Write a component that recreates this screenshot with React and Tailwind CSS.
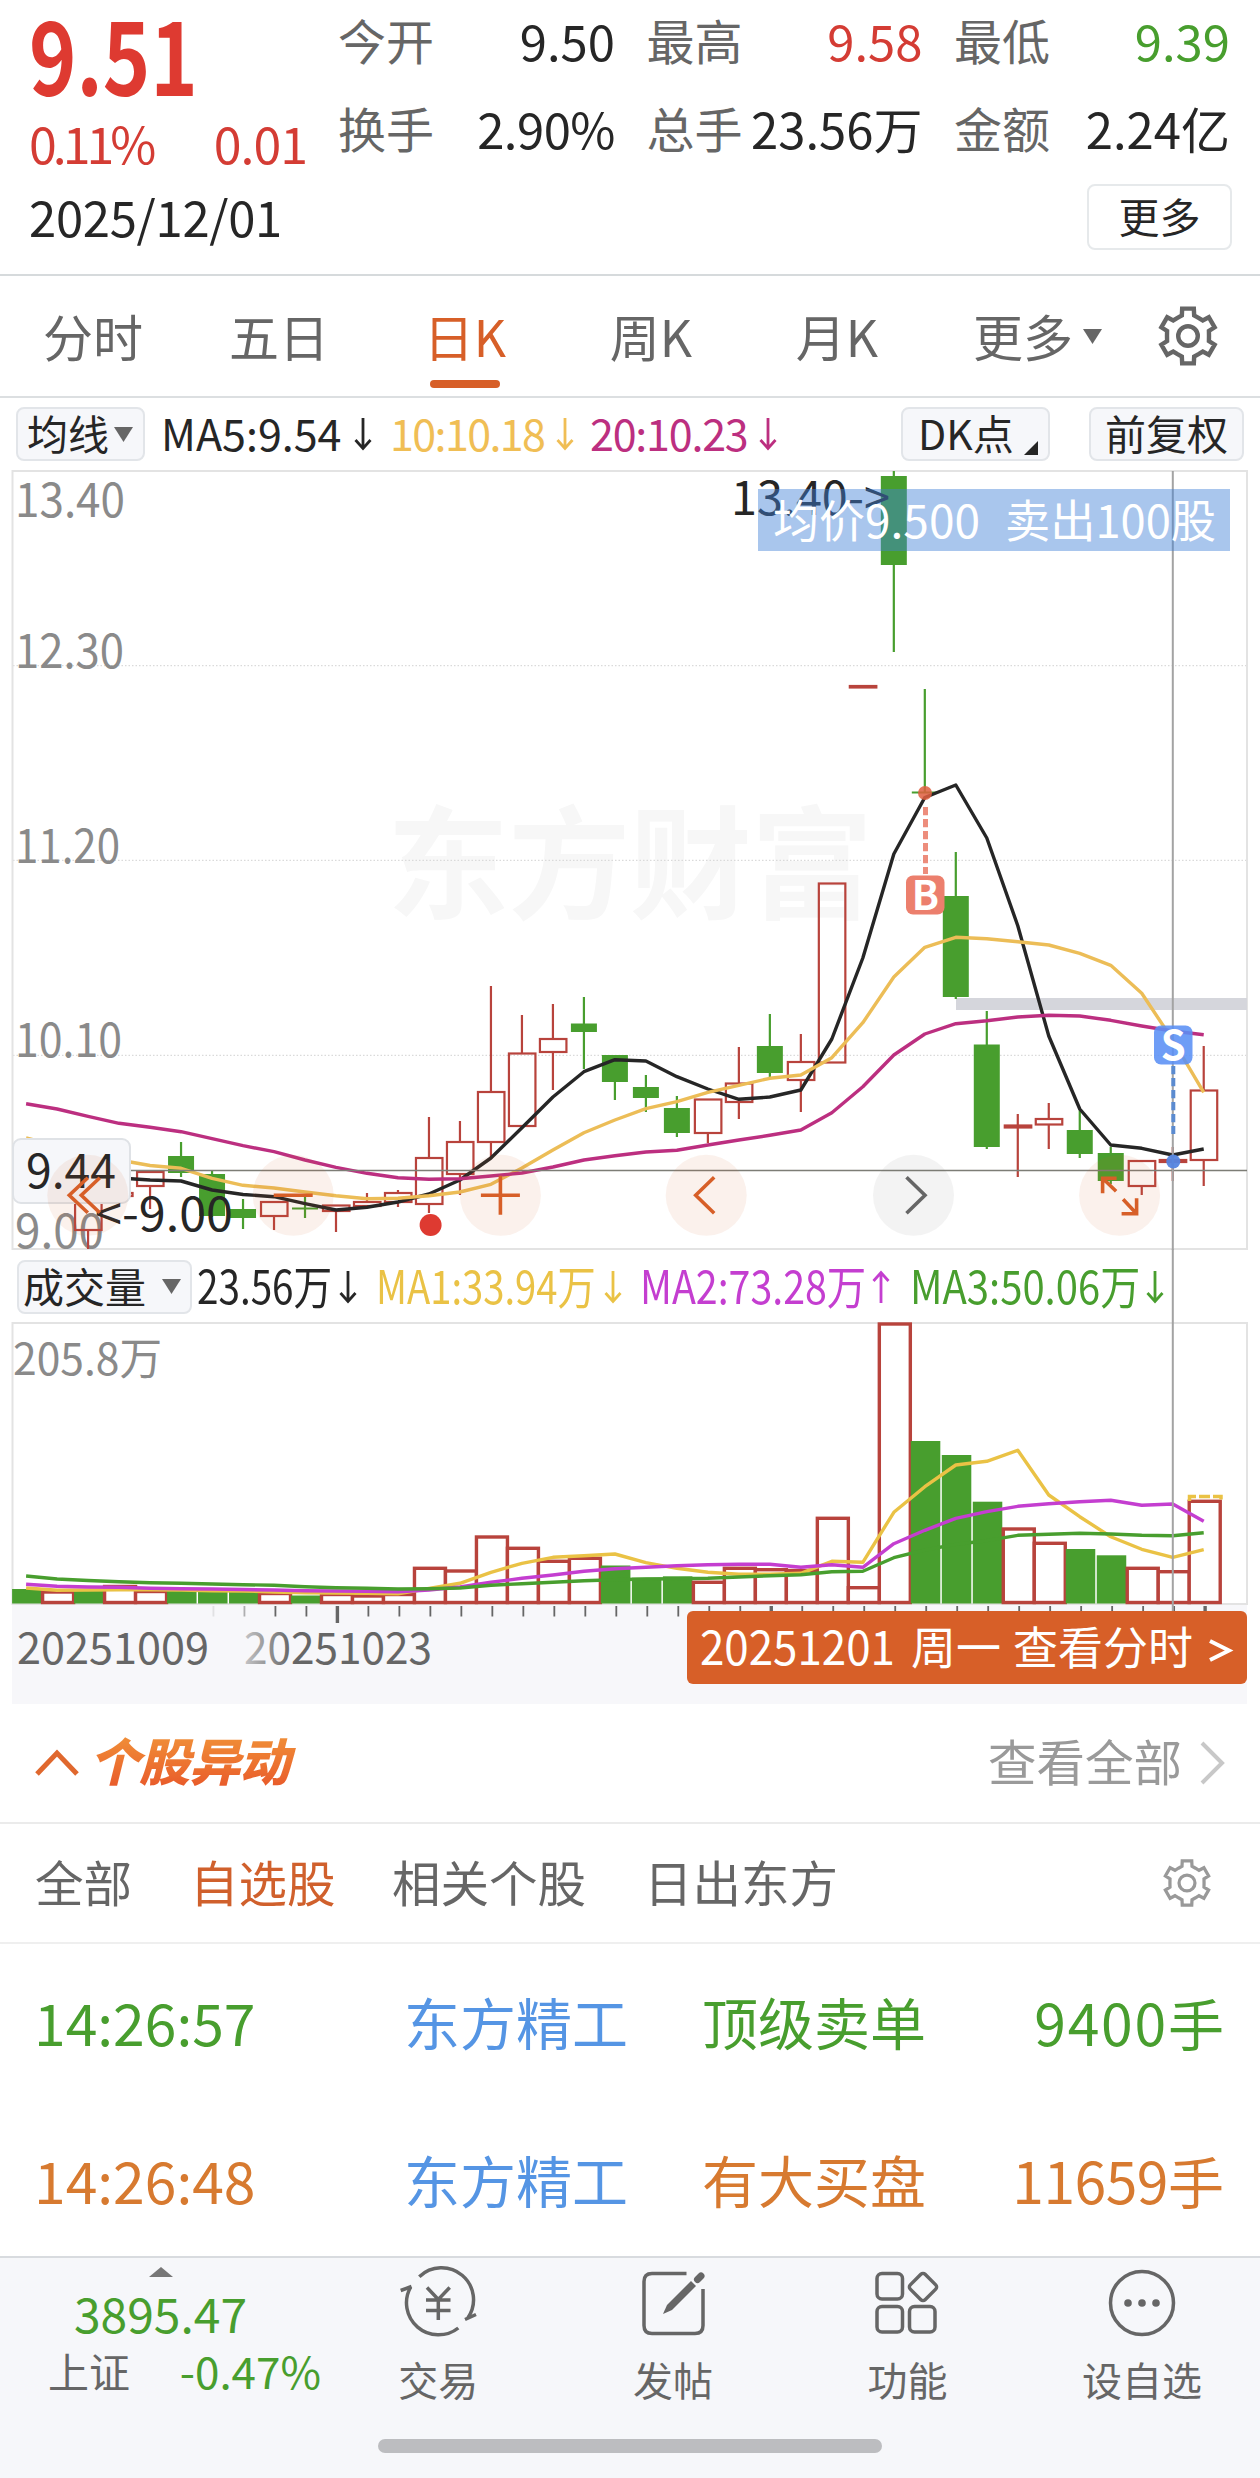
const INK = '#262626'
const UP = '#b8433c'
const DOWN = '#489e2e'

const xAt = (i) => 26.1 + 30.99 * i

/* [high, bodyTop, bodyBottom, low, rising] for each trading day */
const candles = [
  null,
  null,
  [1190, 1190, 1230, 1249, 1],
  [1193, 1193, 1196, 1196, 1],
  [1172, 1172, 1186, 1209, 1],
  [1142, 1156, 1173, 1177, 0],
  [1171, 1174, 1216, 1217, 0],
  [1199, 1209, 1218, 1229, 0],
  [1202, 1202, 1216, 1230, 1],
  [1197, 1207.5, 1209, 1218, 0],
  [1205, 1205.5, 1211, 1232, 1],
  [1193, 1202, 1206, 1206, 1],
  [1190, 1193, 1202, 1207, 1],
  [1117, 1158, 1204, 1213, 1],
  [1121, 1142, 1174, 1195, 1],
  [986, 1092, 1142, 1157, 1],
  [1015, 1053.5, 1126, 1126, 1],
  [1004, 1039, 1052, 1090, 1],
  [997, 1023.5, 1032, 1069, 0],
  [1055, 1055, 1082, 1100, 0],
  [1075, 1087, 1098, 1112, 0],
  [1096, 1108, 1133, 1137, 0],
  [1099, 1099.5, 1133, 1143, 1],
  [1047, 1083.5, 1102, 1119, 1],
  [1014, 1046, 1073, 1078, 0],
  [1034, 1062, 1080, 1112, 1],
  [883.5, 883.5, 1062.5, 1062.5, 1],
  [686, 686, 687.5, 687.5, 1],
  [471, 476, 565, 652, 0],
  [689, 791.5, 793, 793, 0],
  [852, 896, 997, 999, 0],
  [1011, 1044.5, 1147, 1149, 0],
  [1114, 1125.5, 1127.5, 1177, 1],
  [1103, 1119, 1124.5, 1149, 1],
  [1110, 1130, 1154, 1158, 0],
  [1147, 1153, 1181, 1184, 0],
  [1160, 1161, 1186, 1195, 1],
  [1147, 1160, 1162, 1181, 1],
  [1046, 1090.5, 1160, 1186, 1],
]

const ma5 = [1176, 1176, 1177, 1178, 1180, 1181, 1190, 1194.5, 1196.7, 1203.7, 1210, 1207.3, 1202, 1194, 1180, 1158, 1127.7, 1097, 1071.7, 1059.7, 1061, 1076.7, 1089, 1099.3, 1097, 1090, 1039, 958, 854, 797.5, 785, 838, 925.7, 1036, 1109, 1145, 1148.3, 1155, 1149]
const ma10 = [1138, 1146, 1154, 1160, 1165.5, 1168.3, 1178.3, 1185.3, 1188, 1192, 1195.7, 1198.7, 1198.3, 1195.7, 1192, 1184.3, 1168, 1150, 1132.7, 1120, 1108.7, 1101.7, 1092.3, 1085.3, 1078.3, 1075, 1057.7, 1022.7, 977, 947.3, 937.3, 938.7, 941.7, 945, 953.3, 965.3, 993.3, 1040, 1092.3]
const ma20 = [1103.7, 1109, 1116.3, 1123.3, 1127.3, 1131.7, 1138.7, 1145.7, 1151.7, 1160, 1167.3, 1173.3, 1177.7, 1179.3, 1178.7, 1176, 1173, 1167, 1160, 1155.7, 1152, 1150.3, 1145, 1140, 1135.3, 1130, 1112.7, 1086.7, 1055, 1034, 1023.7, 1020.7, 1017, 1015.3, 1016, 1020.3, 1026, 1031, 1034.7]

/* [top, rising] for each volume bar */
const volumes = [
  [1589, 0], [1592, 1], [1590, 0], [1586.5, 1], [1591.5, 1], [1590, 0], [1590, 0], [1592, 0], [1593.5, 1], [1595.5, 0],
  [1594.5, 1], [1596, 1], [1594.5, 1], [1568.3, 1], [1571, 1], [1537, 1], [1548.3, 1], [1561.3, 1], [1558.3, 1], [1565.5, 0],
  [1577.7, 0], [1576.3, 0], [1582.3, 1], [1568.3, 1], [1569.7, 1], [1570.5, 1], [1518.3, 1], [1587.7, 1], [1324, 1], [1441, 0],
  [1455, 0], [1501.7, 0], [1529, 1], [1543.3, 1], [1549, 0], [1555.3, 0], [1568.3, 1], [1571.7, 1], [1501.3, 1],
]

const vma1 = [1588, 1590.3, 1590, 1589.7, 1589.7, 1590, 1590.7, 1591, 1592, 1592.7, 1593, 1593.3, 1593.7, 1588.5, 1583.3, 1572.3, 1563.3, 1557.3, 1555.7, 1554, 1562.7, 1568.3, 1572.3, 1574.3, 1574.3, 1573.3, 1561.3, 1562.3, 1512.3, 1486.7, 1465, 1461.3, 1450.3, 1495, 1516.7, 1536.7, 1549.3, 1557.3, 1549.7]
const vma2 = [1584.3, 1586.3, 1587, 1587.3, 1588.3, 1588.7, 1589, 1589.5, 1590, 1590.7, 1591, 1591.3, 1591.7, 1590, 1587, 1582.3, 1578.3, 1575, 1571.3, 1568.7, 1567.3, 1565.7, 1564.7, 1564.3, 1564.3, 1567.3, 1564.7, 1567.3, 1543.7, 1530.3, 1518.3, 1511.7, 1506.3, 1503.7, 1501.7, 1500.3, 1505.3, 1504, 1521.3]
const vma3 = [1576, 1579, 1580.5, 1581.7, 1582.7, 1583.3, 1584, 1584.7, 1585.3, 1586.7, 1587.7, 1588.3, 1589, 1588.7, 1588, 1585.3, 1583.7, 1582.3, 1580.7, 1579.7, 1579, 1578.7, 1578.3, 1577, 1575.7, 1574.7, 1571.7, 1571.3, 1557.7, 1550, 1544.3, 1540.7, 1535.3, 1534.3, 1533.3, 1534, 1535.3, 1535.7, 1532.7]

const Line = ({ ys, color }) => (
  <polyline points={ys.map((y, i) => `${xAt(i)},${y}`).join(' ')} fill="none" stroke={color} strokeWidth="3.4" strokeLinejoin="round" />
)

function Candle({ i, data }) {
  if (!data) return null
  const [high, top, bottom, low, rising] = data
  const x = xAt(i)
  if (!rising) {
    return (
      <g fill={DOWN} stroke="none">
        <rect x={x - 1.1} y={high} width="2.2" height={low - high} />
        <rect x={x - 13} y={top} width="26" height={Math.max(2, bottom - top)} />
      </g>
    )
  }
  return (
    <g stroke={UP} strokeWidth="2.2" fill="none">
      <path d={`M${x} ${high}V${top}M${x} ${bottom}V${low}`} />
      <rect x={x - 13} y={top} width="26.5" height={bottom - top} />
    </g>
  )
}

function Arrow({ up = false }) {
  return (
    <svg width="18" height="34" viewBox="0 0 18 34" fill="none" stroke="currentColor" strokeWidth="2.8" className={up ? 'rotate-180' : ''}>
      <path d="M9 1V31M1.5 23L9 31.500L16.500 23" />
    </svg>
  )
}

function Gear({ size, stroke }) {
  const pts = []
  for (let k = 0; k < 6; k++) {
    const a = (k * 60 - 90) * (Math.PI / 180)
    const at = (r, d) => `${(32 + r * Math.cos(a + d)).toFixed(2)} ${(32 + r * Math.sin(a + d)).toFixed(2)}`
    pts.push(at(21.5, -0.29), at(28, -0.21), at(28, 0.21), at(21.5, 0.29), at(21, 0.523))
  }
  return (
    <svg width={size} height={size} viewBox="0 0 64 64" fill="none" stroke="currentColor" strokeWidth={stroke} strokeLinejoin="miter">
      <path d={`M${pts.join('L')}Z`} />
      <circle cx="32" cy="32" r="9.8" />
    </svg>
  )
}

const Caret = ({ className = '' }) => (
  <svg width="19" height="15" viewBox="0 0 19 15" className={className}>
    <path d="M0 0H19L9.500 15Z" fill="#666" />
  </svg>
)

function Stat({ label, value, className = 'text-[#262626]' }) {
  return (
    <div className="flex h-[88px] items-center justify-between whitespace-nowrap">
      <span className="text-[48px] text-[#666]">{label}</span>
      <span className={`text-[49px] ${className}`}>{value}</span>
    </div>
  )
}

function Header() {
  return (
    <header className="flex h-[276px] border-b-2 border-[#d6dadc] leading-none">
      <div className="w-[338px] shrink-0 pl-[29px]">
        <div className="flex h-[110px] items-center pb-[7px]">
          <span className="origin-left scale-x-[0.79] text-[102px] font-bold text-[#de3a31]">9.51</span>
        </div>
        <div className="flex h-[66px] items-center justify-between pr-[31px] pb-[3px] text-[50px] text-[#d43c34]">
          <span className="tracking-[-4px]">0.11%</span>
          <span className="tracking-[-1px]">0.01</span>
        </div>
        <div className="flex h-[84px] items-center pb-[5px] text-[49px] tracking-[-0.3px] whitespace-nowrap text-[#262626]">2025/12/01</div>
      </div>
      <div className="mt-[-5px] w-[892px]">
        <div className="grid grid-cols-[277px_276px_276px] justify-between">
          <Stat label="今开" value="9.50" />
          <Stat label="最高" value="9.58" className="text-[#d43c34]" />
          <Stat label="最低" value="9.39" className="text-[#489e2e]" />
          <Stat label="换手" value="2.90%" className="tracking-[-0.5px] text-[#262626]" />
          <Stat label="总手" value="23.56万" />
          <Stat label="金额" value="2.24亿" />
        </div>
        <div className="mt-[13px] flex justify-end">
          <button className="mr-[-2px] h-[66px] w-[145px] rounded-lg border-2 border-[#e6e9eb] pb-[4px] text-[41px] text-[#262626]">更多</button>
        </div>
      </div>
    </header>
  )
}

function PeriodTabs() {
  const tabs = ['分时', '五日', '日K', '周K', '月K', '更多']
  return (
    <nav className="flex h-[122px] items-center border-b-2 border-[#dcdfe1] text-[50px] leading-none text-[#666]">
      {tabs.map((t) => (
        <div key={t} className={`relative flex h-full w-[186px] items-center justify-center pb-[2px] ${t === '日K' ? 'text-[#d75f28]' : ''}`}>
          {t}
          {t === '日K' && <i className="absolute bottom-[8px] h-[8px] w-[70px] rounded-full bg-[#d75f28]" />}
          {t === '更多' && <Caret className="absolute right-[14px] top-[53px]" />}
        </div>
      ))}
      <div className="flex flex-1 justify-center">
        <Gear size={64} stroke={4.4} />
      </div>
    </nav>
  )
}

const chip = 'flex items-center rounded-lg border-2 border-[#e2e5e9] bg-[#f6f7fa] text-[41px] text-[#262626]'

function AverageRow() {
  return (
    <div className="flex h-[72px] items-center pr-[16px] pl-[16px] text-[43px] leading-none whitespace-nowrap">
      <div className={`${chip} h-[54px] w-[129px] pb-[3px] pl-[9px]`}>
        均线
        <Caret className="mt-[3px] ml-[5px]" />
      </div>
      <div className="ml-[16px] flex w-[229px] items-center gap-[13px] text-[#262626]">
        <span className="-mt-[4px]">MA5:9.54</span>
        <Arrow />
      </div>
      <div className="flex w-[200px] items-center gap-[12px] text-[#f0be55]">
        <span className="-mt-[4px] tracking-[-1.6px]">10:10.18</span>
        <Arrow />
      </div>
      <div className="flex items-center gap-[11px] text-[#bc2f80]">
        <span className="-mt-[4px] tracking-[-1.2px]">20:10.23</span>
        <Arrow />
      </div>
      <div className={`${chip} ml-auto h-[54px] w-[149px] pb-[3px] pl-[15px]`}>
        DK点
        <svg width="14" height="14" viewBox="0 0 14 14" className="mt-[30px] ml-[10px]">
          <path d="M14 0V14H0Z" fill={INK} />
        </svg>
      </div>
      <div className={`${chip} ml-[39px] h-[54px] w-[155px] justify-center pb-[3px]`}>前复权</div>
    </div>
  )
}

function RoundButton({ x, neutral, children }) {
  return (
    <g>
      <circle cx={x} cy="1195.300" r="40.500" fill={neutral ? '#666' : '#d75f28'} fillOpacity={neutral ? 0.08 : 0.09} />
      <g transform={`translate(${x} 1195.300)`} fill="none" stroke={neutral ? '#666' : '#d75f28'} strokeWidth="3.600">
        {children}
      </g>
    </g>
  )
}

function PriceChart() {
  const levels = [
    ['13.40', 517, 108],
    ['12.30', 667.5, 107],
    ['11.20', 862.5, 103],
    ['10.10', 1057, 105],
    ['9.00', 1247.5, 87],
  ]
  return (
    <svg viewBox="0 470 1260 780" width="1260" height="780" className="block overflow-visible">
      <text x="387" y="909" fontSize="122" fontWeight="700" fill="#f7f7f7" textLength="486">东方财富</text>
      <g stroke="#dadada" strokeWidth="1.200" strokeDasharray="1.500 2">
        <path d="M13 665.700H1247M13 860.300H1247M13 1055.300H1247" />
      </g>
      <rect x="12.500" y="471" width="1234.500" height="778" fill="none" stroke="#e3e3e3" strokeWidth="2" />
      {levels.map(([t, y, w]) => (
        <text key={t} x="15" y={y} fontSize="47" fill="#8a8a8a" textLength={w + 2} lengthAdjust="spacingAndGlyphs">{t}</text>
      ))}
      <rect x="956" y="998" width="291" height="12" fill="#d5d6dc" />
      {candles.map((c, i) => (
        <Candle key={i} i={i} data={c} />
      ))}
      <text x="731" y="514.500" fontSize="47" fill={INK} textLength="159" lengthAdjust="spacingAndGlyphs">13.40-&gt;</text>
      <Line ys={ma5} color={INK} />
      <Line ys={ma10} color="#ecbd57" />
      <Line ys={ma20} color="#bc2f80" />
      <circle cx="430.600" cy="1225" r="11" fill="#de3a31" />

      <g opacity="0.85">
        <circle cx="925" cy="793" r="7" fill="#e05f40" />
        <path d="M925.500 807V874" stroke="#ea7a66" strokeWidth="5" strokeDasharray="8.300 3.700" />
      </g>
      <rect x="906" y="875.500" width="38.500" height="39" rx="7" fill="#ec7f6d" />
      <text x="925.300" y="909.500" fontSize="40" fontWeight="700" fill="#fff" textAnchor="middle">B</text>

      <path d="M130 1170.500H1247" stroke="#7d7d76" strokeWidth="1.500" />
      <path d="M1172.800 471V1250" stroke="#a3a3a3" strokeWidth="2" />
      <path d="M1173.300 1066V1134" stroke="#5b8bd0" strokeWidth="4" strokeDasharray="8.300 3.700" />
      <rect x="1154" y="1025.500" width="38.500" height="39" rx="7" fill="#5a90f5" fillOpacity="0.88" />
      <text x="1173.300" y="1060" fontSize="40" fontWeight="700" fill="#fff" textAnchor="middle">S</text>
      <circle cx="1173.300" cy="1161.500" r="7" fill="#5585e0" fillOpacity="0.95" />

      <rect x="758" y="489" width="472" height="62" fill="#4080d8" fillOpacity="0.45" />
      <g fontSize="45" fill="#fff">
        <text x="773" y="538" textLength="207" lengthAdjust="spacingAndGlyphs">均价9.500</text>
        <text x="1005" y="538" textLength="211" lengthAdjust="spacingAndGlyphs">卖出100股</text>
      </g>

      <rect x="13" y="1139" width="117" height="64" rx="8" fill="#f6f7fa" stroke="#dfe2e6" strokeWidth="2" />
      <text x="26" y="1188" fontSize="47" fill={INK} textLength="90" lengthAdjust="spacingAndGlyphs">9.44</text>
      <text x="95" y="1231" fontSize="47" fill={INK} textLength="138" lengthAdjust="spacingAndGlyphs">&lt;-9.00</text>

      <RoundButton x={87.8}><path d="M0 -17.500L-18.500 0L0 17.500M12 -17.500L-6.500 0L12 17.500" /></RoundButton>
      <RoundButton x={293.2}><path d="M-19.500 0H19.500" /></RoundButton>
      <RoundButton x={500.4}><path d="M-19.500 0H19.500M0 -19.500V19.500" /></RoundButton>
      <RoundButton x={706.2}><path d="M8 -18L-10.500 0L8 18" /></RoundButton>
      <RoundButton x={913.5} neutral><path d="M-7 -18L11.500 0L-7 18" /></RoundButton>
      <RoundButton x={1119.6}><path d="M-3 -17H-17V-2M-17 -17L-3.500 -4M2 18.500H17V3M17 18.500L3.500 4" /></RoundButton>
    </svg>
  )
}

function VolumeItem({ text, up, className }) {
  return (
    <div className={`flex items-center justify-between ${className}`}>
      {text}
      <Arrow up={up} />
    </div>
  )
}

const Squeezed = ({ children, className }) => <span className={`-mt-[5px] block origin-left ${className}`}>{children}</span>

function VolumeRow() {
  return (
    <div className="flex h-[73px] items-center pl-[17px] text-[46px] leading-none whitespace-nowrap">
      <div className={`${chip} h-[54px] w-[175px] shrink-0 pb-[3px] pl-[4px]`}>
        成交量
        <Caret className="mt-[3px] ml-[16px]" />
      </div>
      <VolumeItem className="ml-[5px] w-[160px] text-[#262626]" text={<Squeezed className="w-[120px] scale-x-[0.84]">23.56万</Squeezed>} />
      <VolumeItem className="ml-[19px] w-[246px] text-[#eac245]" text={<Squeezed className="w-[210px] scale-x-[0.83]">MA1:33.94万</Squeezed>} />
      <VolumeItem up className="ml-[18px] w-[250px] text-[#c43ed0]" text={<Squeezed className="w-[210px] scale-x-[0.855]">MA2:73.28万</Squeezed>} />
      <VolumeItem className="ml-[20px] w-[254px] text-[#489e2e]" text={<Squeezed className="w-[210px] scale-x-[0.87]">MA3:50.06万</Squeezed>} />
    </div>
  )
}

function VolumeChart() {
  return (
    <svg viewBox="0 1323 1260 381" width="1260" height="381" className="block overflow-visible">
      <defs>
        <linearGradient id="fade" x1="0" x2="1">
          <stop offset="0" stopColor="#666" stopOpacity="0.35" />
          <stop offset="0.25" stopColor="#666" />
        </linearGradient>
      </defs>
      <rect x="12" y="1604" width="1235" height="100" fill="#f7f7fa" />
      <rect x="12.500" y="1323" width="1234.500" height="281" fill="none" stroke="#e3e3e3" strokeWidth="2" />
      <text x="13" y="1374.500" fontSize="44" fill="#8a8a8a" textLength="149" lengthAdjust="spacingAndGlyphs">205.8万</text>
      {volumes.map(([top, rising], i) =>
        rising ? (
          <rect key={i} x={xAt(i) + 1 - 15.5} y={top} width="31" height={1602.5 - top} fill="#fff" stroke={UP} strokeWidth="3.400" />
        ) : (
          <rect key={i} x={xAt(i) - 14} y={top} width="29.500" height={1603.5 - top} fill={DOWN} />
        ),
      )}
      <Line ys={vma1} color="#eac245" />
      <Line ys={vma2} color="#c43ed0" />
      <Line ys={vma3} color={DOWN} />
      <path d="M1189.500 1501V1496.500H1221V1501" fill="none" stroke="#eac245" strokeWidth="3.500" strokeDasharray="11 3" />
      {volumes.map((_, i) => {
        if (i < 6) return null
        const major = i === 10 || i === 24 || i === 38
        return <rect key={i} x={xAt(i) + (major ? -0.3 : 0.5)} y="1606" width={major ? 3.4 : 1.8} height={i === 10 ? 17 : 10.5} fill="#666" opacity={i === 6 ? 0.15 : i === 7 ? 0.5 : 1} />
      })}
      <path d="M1172.800 1249V1611" stroke="#a3a3a3" strokeWidth="2" />
      <text x="17" y="1663.500" fontSize="44" fill="#666" textLength="192" lengthAdjust="spacingAndGlyphs">20251009</text>
      <text x="244" y="1663.500" fontSize="44" fill="url(#fade)" textLength="188" lengthAdjust="spacingAndGlyphs">20251023</text>
      <rect x="687" y="1611" width="560" height="73" rx="6" fill="#d75f28" />
      <g fontSize="47" fill="#fff">
        <text x="700" y="1665" textLength="195" lengthAdjust="spacingAndGlyphs">20251201</text>
        <text x="911" y="1665" fontSize="45">周一</text>
        <text x="1013" y="1665" fontSize="45">查看分时</text>
      </g>
      <path d="M1210 1641L1229 1650.500L1210 1660" fill="none" stroke="#fff" strokeWidth="4" />
    </svg>
  )
}

function MovesPanel() {
  const rows = [
    ['14:26:57', '顶级卖单', '9400', 'text-[#489e2e]', 'tracking-[1.8px]'],
    ['14:26:48', '有大买盘', '11659', 'text-[#d77a30]', 'tracking-[-0.5px]'],
  ]
  return (
    <section className="h-[552px] overflow-hidden leading-none">
      <div className="flex h-[120px] items-center border-b-2 border-[#ebebeb] pr-[35px] pl-[35px]">
        <svg width="44" height="28" viewBox="0 0 44 28" fill="none" stroke="#e0682e" strokeWidth="5">
          <path d="M2 25L22 4L42 25" />
        </svg>
        <span className="mt-[-4px] ml-[10px] bg-gradient-to-b from-[#f09038] to-[#e8582a] bg-clip-text pr-[8px] pb-[4px] text-[51px] font-black tracking-[-1px] italic text-transparent">个股异动</span>
        <span className="mt-[-5px] ml-auto text-[48.500px] text-[#9a9a9a]">查看全部</span>
        <svg width="26" height="44" viewBox="0 0 26 44" fill="none" stroke="#c8c8c8" strokeWidth="4" className="ml-[17px]">
          <path d="M3 2L23 22L3 42" />
        </svg>
      </div>
      <div className="flex h-[120px] items-center border-b-2 border-[#efefef] pb-[4px] pl-[35px] text-[48.500px] text-[#666]">
        <span className="w-[155px]">全部</span>
        <span className="w-[202px] text-[#d0602c]">自选股</span>
        <span className="w-[252px]">相关个股</span>
        <span>日出东方</span>
        <span className="mt-[3px] mr-[47px] ml-auto text-[#999]">
          <Gear size={52} stroke={4} />
        </span>
      </div>
      {rows.map(([time, kind, amount, color, spacing]) => (
        <div key={time} className={`grid h-[158px] grid-cols-[370px_298px_1fr_auto] items-center pr-[36px] pb-[4px] pl-[34px] text-[56px] ${color}`}>
          <span className="text-[57px]">{time}</span>
          <span className="text-[#5595e4]">东方精工</span>
          <span>{kind}</span>
          <span>
            <span className={`text-[57px] ${spacing}`}>{amount}</span>手
          </span>
        </div>
      ))}
    </section>
  )
}

function NavItem({ label, children }) {
  return (
    <div className="flex w-[234.600px] flex-col items-center pt-[7px] text-[40px] text-[#666]">
      <svg width="80" height="80" viewBox="0 0 80 80" fill="none" stroke="currentColor" strokeWidth="3.500">
        {children}
      </svg>
      <span className="mt-[14px]">{label}</span>
    </div>
  )
}

function BottomBar() {
  return (
    <footer className="h-[222px] border-t-2 border-[#d8dbdf] bg-[#f6f7fa] leading-none">
      <div className="flex h-[181px]">
        <div className="w-[321px] shrink-0 text-[#489e2e]">
          <div className="flex h-[30px] justify-center pt-[9px]">
            <svg width="24" height="10" viewBox="0 0 24 10"><path d="M12 0L24 10H0Z" fill="#777" /></svg>
          </div>
          <div className="flex justify-center text-[48px]">3895.47</div>
          <div className="mt-[12px] flex items-center justify-between pl-[48px] text-[44px]">
            <span className="text-[41px] text-[#666]">上证</span>
            <span>-0.47%</span>
          </div>
        </div>
        <NavItem label="交易">
          <path d="M21.300 11.700A32 32 0 0 1 70 52.700M60.300 63A32 32 0 0 1 12.700 22" />
          <path d="M13.500 21.500L2.700 25.500M67 54.500L78 49.500" />
          <path d="M29 22.500L40.300 34.500L51.700 22.500M28 35H52.500M28 45.500H52.500M40.300 34V55" />
        </NavItem>
        <NavItem label="发帖">
          <path d="M53.500 8.500H19Q11 8.500 11 16.500V60.500Q11 68.500 19 68.500H62Q70 68.500 70 60.500V24" />
          <path d="M30 49L34 40L58 16L63 21L39 45Z" fill="currentColor" stroke="none" />
          <path d="M64.500 14.500L68 11" strokeWidth="7" strokeLinecap="round" />
        </NavItem>
        <NavItem label="功能">
          <rect x="10" y="8.500" width="25.500" height="25.500" rx="5" />
          <rect x="10" y="41.500" width="25.500" height="25.500" rx="5" />
          <rect x="42.500" y="41.500" width="25.500" height="25.500" rx="5" />
          <rect x="45.500" y="11.500" width="21" height="21" rx="3" transform="rotate(45 56 22)" />
        </NavItem>
        <NavItem label="设自选">
          <circle cx="40" cy="38" r="31.500" />
          <g fill="currentColor" stroke="none"><circle cx="26" cy="38" r="3.800" /><circle cx="40" cy="38" r="3.800" /><circle cx="54" cy="38" r="3.800" /></g>
        </NavItem>
      </div>
      <div className="mx-auto h-[14px] w-[504px] rounded-full bg-[#bcbdc0]" />
    </footer>
  )
}

export default function App() {
  return (
    <div className="h-[2478px] w-[1260px] overflow-hidden bg-white font-['Noto_Sans_CJK_SC',sans-serif]">
      <Header />
      <PeriodTabs />
      <AverageRow />
      <PriceChart />
      <VolumeRow />
      <VolumeChart />
      <MovesPanel />
      <BottomBar />
    </div>
  )
}
